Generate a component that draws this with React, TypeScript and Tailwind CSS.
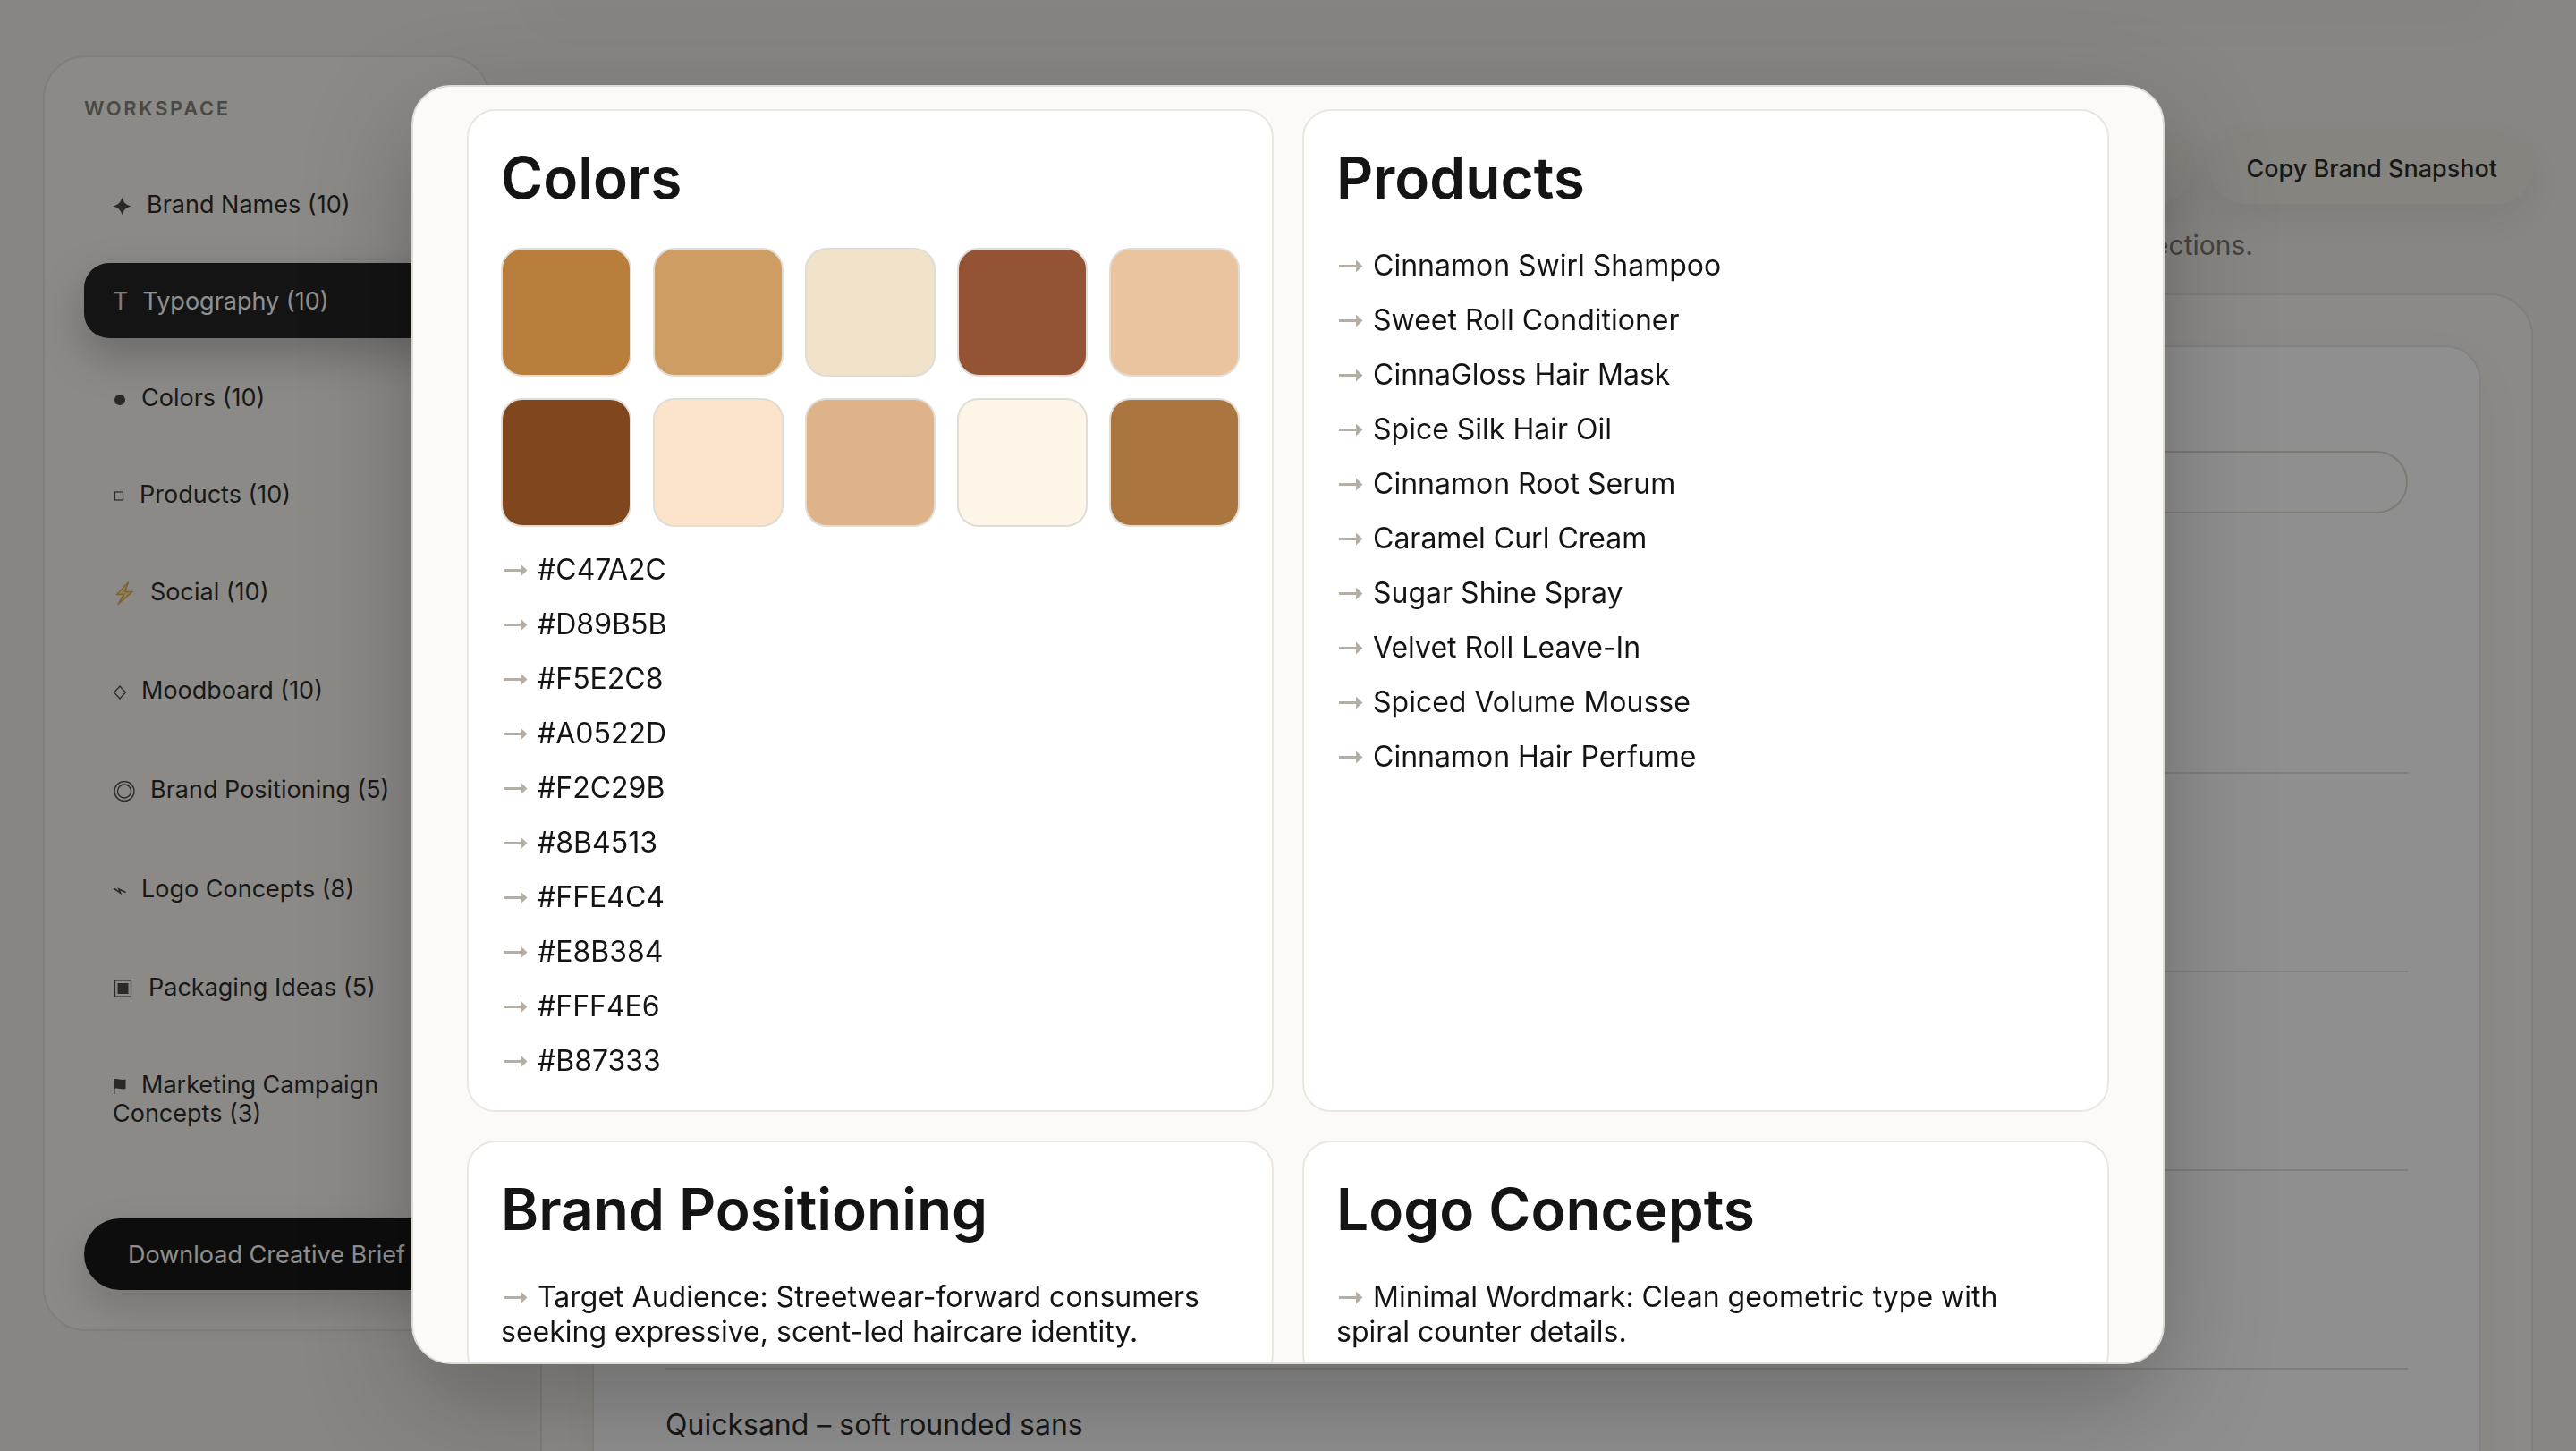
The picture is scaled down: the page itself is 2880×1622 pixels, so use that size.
import { useState, type ReactNode } from 'react';
import clsx from 'clsx';

type NavItem = {
  label: string;
  height: string;
  icon: ReactNode;
};

const ICON = 'mr-4 inline-block align-middle opacity-85';

const NAV: NavItem[] = [
  {
    label: 'Brand Names (10)',
    height: 'min-h-[84px]',
    icon: (
      <svg className={clsx(ICON, 'h-5 w-[22px]')} viewBox="0 0 22 20" fill="currentColor" aria-hidden="true">
        <path d="M10.500 -.500C12 5 14 7.500 20.500 9.500 14 11.500 12 14 10.500 19.500 9 14 7 11.500 .500 9.500 7 7.500 9 5 10.500 -.500z" />
      </svg>
    ),
  },
  {
    label: 'Typography (10)',
    height: 'min-h-[84px]',
    icon: <span className="mr-4 opacity-85">T</span>,
  },
  {
    label: 'Colors (10)',
    height: 'min-h-[84px]',
    icon: (
      <svg className={clsx(ICON, 'h-4 w-4')} viewBox="0 0 16 16" fill="currentColor" aria-hidden="true">
        <circle cx="8" cy="8" r="6" />
      </svg>
    ),
  },
  {
    label: 'Products (10)',
    height: 'min-h-[84px]',
    icon: (
      <svg className={clsx(ICON, 'h-4 w-3.5')} viewBox="0 0 14 16" fill="none" stroke="currentColor" aria-hidden="true">
        <rect x="2.500" y="3" width="9" height="9" strokeWidth="1.200" />
      </svg>
    ),
  },
  {
    label: 'Social (10)',
    height: 'min-h-[86px]',
    icon: (
      <svg className={clsx(ICON, 'h-7 w-[26px]')} viewBox="0 0 26 28" aria-hidden="true">
        <path
          d="M17.500 1 4.500 14.500h8L6 25.500 22 11.500h-8.500z"
          fill="#f5dc8a"
          stroke="#dc9a2c"
          strokeWidth="1.500"
          strokeLinejoin="round"
        />
      </svg>
    ),
  },
  {
    label: 'Moodboard (10)',
    height: 'min-h-[86px]',
    icon: (
      <svg className={clsx(ICON, 'h-4 w-4')} viewBox="0 0 16 16" fill="none" stroke="currentColor" aria-hidden="true">
        <path d="M8 1 14.500 8 8 15 1.500 8z" strokeWidth="1.200" />
      </svg>
    ),
  },
  {
    label: 'Brand Positioning (5)',
    height: 'min-h-[88px]',
    icon: (
      <svg className={clsx(ICON, 'h-6 w-[26px]')} viewBox="0 0 26 24" fill="none" stroke="currentColor" aria-hidden="true">
        <circle cx="13" cy="11.500" r="11" strokeWidth="1.300" />
        <circle cx="13" cy="11.500" r="7.500" strokeWidth="1.300" />
      </svg>
    ),
  },
  {
    label: 'Logo Concepts (8)',
    height: 'min-h-[86px]',
    icon: (
      <svg className={clsx(ICON, 'h-4 w-4')} viewBox="0 0 16 16" fill="none" stroke="currentColor" aria-hidden="true">
        <path d="M1 5 8.500 10 7 6 14.500 9.500" strokeWidth="1.800" />
      </svg>
    ),
  },
  {
    label: 'Packaging Ideas (5)',
    height: 'min-h-[86px]',
    icon: (
      <svg className={clsx(ICON, 'h-6 w-6')} viewBox="0 0 24 24" fill="none" stroke="currentColor" aria-hidden="true">
        <rect x="2.500" y="2" width="18" height="18" strokeWidth="1.200" />
        <rect x="5.500" y="5" width="12" height="12" fill="currentColor" stroke="none" />
      </svg>
    ),
  },
  {
    label: 'Marketing Campaign Concepts (3)',
    height: 'min-h-[116px]',
    icon: (
      <svg className={clsx(ICON, 'h-5 w-4')} viewBox="0 0 16 20" fill="currentColor" aria-hidden="true">
        <path d="M1 1h1.500v17H1z" />
        <path d="M2 1.500c4-1.500 6 1.500 12.500 0V12C9 13.500 6 10.500 2 12z" />
      </svg>
    ),
  },
];

const SWATCHES = [
  'bg-[#b97e3b]',
  'bg-[#cd9d63]',
  'bg-[#f0e3ca]',
  'bg-[#945334]',
  'bg-[#eac39f]',
  'bg-[#80471f]',
  'bg-[#fbe4c9]',
  'bg-[#dfb38a]',
  'bg-[#fdf5e7]',
  'bg-[#ab753f]',
];

const HEX_CODES = [
  '#C47A2C',
  '#D89B5B',
  '#F5E2C8',
  '#A0522D',
  '#F2C29B',
  '#8B4513',
  '#FFE4C4',
  '#E8B384',
  '#FFF4E6',
  '#B87333',
];

const PRODUCTS = [
  'Cinnamon Swirl Shampoo',
  'Sweet Roll Conditioner',
  'CinnaGloss Hair Mask',
  'Spice Silk Hair Oil',
  'Cinnamon Root Serum',
  'Caramel Curl Cream',
  'Sugar Shine Spray',
  'Velvet Roll Leave-In',
  'Spiced Volume Mousse',
  'Cinnamon Hair Perfume',
];

const POSITIONING = ['Target Audience: Streetwear-forward consumers seeking expressive, scent-led haircare identity.'];

const LOGOS = ['Minimal Wordmark: Clean geometric type with spiral counter details.'];

const FONT_ROWS = ['', '', '', '', 'Quicksand – soft rounded sans'];

function Arrow() {
  return (
    <svg className="mr-[9px] inline-block h-4 w-8 text-[#b5aea4]" viewBox="0 0 32 16" aria-hidden="true">
      <path d="M3 5h19V-.500l7.500 7-7.500 7V8H3z" fill="currentColor" />
    </svg>
  );
}

function ArrowList({ items }: { items: string[] }) {
  return (
    <ul className="space-y-[22px] text-[32px] leading-[39px]">
      {items.map((item) => (
        <li key={item}>
          <Arrow />
          {item}
        </li>
      ))}
    </ul>
  );
}

function BriefCard({ title, children }: { title: string; children: ReactNode }) {
  return (
    <section className="rounded-[32px] border-2 border-[#ebe7e0] bg-white p-9">
      <h2 className="mb-10 text-[64px] leading-[77px] font-semibold">{title}</h2>
      {children}
    </section>
  );
}

function Sidebar() {
  const [active, setActive] = useState(1);

  return (
    <aside className="w-[500px] shrink-0 self-start rounded-[48px] border-2 border-[#e3dfd8] bg-[#f8f5f0] p-11">
      <p className="mb-[52px] text-[22px] leading-[26px] font-semibold tracking-[0.12em] text-[#7e7a6d]">WORKSPACE</p>
      <nav className="flex flex-col gap-6">
        {NAV.map((item, i) => (
          <button
            key={item.label}
            type="button"
            onClick={() => setActive(i)}
            className={clsx(
              'rounded-[28px] px-8 pt-0.5 text-left text-[27px] leading-8',
              item.height,
              i === active
                ? 'bg-[#141414] text-white shadow-[0_20px_48px_rgba(0,0,0,0.25)]'
                : 'text-[#1c1c1a]',
            )}
          >
            {item.icon}
            {item.label}
          </button>
        ))}
      </nav>
      <button
        type="button"
        className="mt-[76px] h-20 w-full rounded-full bg-[#070707] pt-0.5 text-[27px] text-white shadow-[0_20px_48px_rgba(0,0,0,0.16)]"
      >
        Download Creative Brief
      </button>
    </aside>
  );
}

function Workspace() {
  return (
    <main className="min-w-0 flex-1 pt-[86px]">
      <div className="flex justify-end gap-5">
        <button
          type="button"
          aria-label="Copy section"
          className="h-20 w-[300px] rounded-full bg-[#eeeae1] shadow-[0_16px_48px_rgba(0,0,0,0.08)]"
        />
        <button
          type="button"
          className="h-20 rounded-full bg-[#eeeae1] px-10 pt-0.5 text-[27px] font-medium text-[#1c1c1a] shadow-[0_16px_48px_rgba(0,0,0,0.08)]"
        >
          Copy Brand Snapshot
        </button>
      </div>
      <p className="mt-7 mb-9 pr-[313px] text-right text-[30px] leading-9 text-[#726e63]">directions.</p>

      <section className="rounded-[48px] border-2 border-[#e3dfd8] bg-[#f8f5f0] p-14">
        <div className="rounded-[40px] border-2 border-[#e8e6e2] bg-white px-20 pt-[116px] shadow-[0_20px_60px_rgba(0,0,0,0.04)]">
          <input
            type="text"
            aria-label="Filter typography"
            className="block h-[70px] w-full rounded-full border-2 border-[#dcd6cb] bg-white px-8"
          />
          <ul className="mt-[69px] text-[32px] leading-[39px] text-[#1c1c1a]">
            {FONT_ROWS.map((row, i) => (
              <li key={i} className="h-[222px] border-b-2 border-[#e2dfd6] py-[42px]">
                {row}
              </li>
            ))}
          </ul>
        </div>
      </section>
    </main>
  );
}

function BriefDialog() {
  return (
    <div className="fixed inset-0 flex items-center justify-center bg-[#141414]/48 pt-[95px] pb-[97px]">
      <div
        role="dialog"
        aria-modal="true"
        aria-label="Creative brief"
        className="h-full w-full max-w-[1960px] overflow-hidden rounded-[44px] border-2 border-[#dfdbd5] bg-[#fbfaf8] px-[60px] pt-[25px] shadow-[0_40px_120px_rgba(0,0,0,0.25)]"
      >
        <div className="grid grid-cols-2 gap-8">
          <BriefCard title="Colors">
            <div className="mb-7 grid grid-cols-5 gap-6">
              {SWATCHES.map((color) => (
                <div key={color} className={clsx('h-36 rounded-3xl border-2 border-[#e0dcd6]', color)} />
              ))}
            </div>
            <ArrowList items={HEX_CODES} />
          </BriefCard>
          <BriefCard title="Products">
            <ArrowList items={PRODUCTS} />
          </BriefCard>
          <BriefCard title="Brand Positioning">
            <ArrowList items={POSITIONING} />
          </BriefCard>
          <BriefCard title="Logo Concepts">
            <ArrowList items={LOGOS} />
          </BriefCard>
        </div>
      </div>
    </div>
  );
}

export default function App() {
  return (
    <div className="h-screen overflow-hidden bg-[#f2eee9] font-[Inter,sans-serif] text-[#141414]">
      <header className="mr-24 ml-[604px] h-0 shadow-[0_0_72px_16px_rgba(0,0,0,0.06)]" />
      <div className="flex gap-14 px-12 pt-[62px]">
        <Sidebar />
        <Workspace />
      </div>
      <BriefDialog />
    </div>
  );
}
